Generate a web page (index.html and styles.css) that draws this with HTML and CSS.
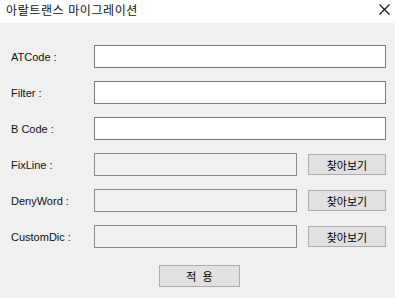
FILE: index.html
```html
<!DOCTYPE html>
<html lang="ko">
<head>
    <meta charset="UTF-8">
    <title>아랄트랜스 마이그레이션</title>
    <link rel="stylesheet" href="styles.css">
</head>
<body>
    <div class="window">
        <header class="title-bar">
            <span class="title">아랄트랜스 마이그레이션</span>
            <svg class="close" width="11" height="11" viewBox="0 0 11 11">
                <path d="M0.5 0.5 L10.5 10.5 M10.5 0.5 L0.5 10.5" stroke="#111" stroke-width="1.1" fill="none"/>
            </svg>
        </header>
        <main class="form">
            <div class="row">
                <label class="label">ATCode :</label>
                <input class="field" type="text">
            </div>
            <div class="row">
                <label class="label">Filter :</label>
                <input class="field" type="text">
            </div>
            <div class="row">
                <label class="label">B Code :</label>
                <input class="field" type="text">
            </div>
            <div class="row">
                <label class="label">FixLine :</label>
                <input class="field readonly" type="text" readonly>
                <button class="btn browse">찾아보기</button>
            </div>
            <div class="row">
                <label class="label">DenyWord :</label>
                <input class="field readonly" type="text" readonly>
                <button class="btn browse">찾아보기</button>
            </div>
            <div class="row">
                <label class="label">CustomDic :</label>
                <input class="field readonly" type="text" readonly>
                <button class="btn browse">찾아보기</button>
            </div>
            <div class="actions">
                <button class="btn apply">적&nbsp;&nbsp;용</button>
            </div>
        </main>
    </div>
</body>
</html>
```

FILE: styles.css
```css
* {
    box-sizing: border-box;
}
body {
    margin: 0;
    background-color: #f0f0f0;
    font-family: "Liberation Sans", "Noto Sans CJK KR", sans-serif;
    font-size: 11px;
    color: #000;
}
.window {
    width: 395px;
    height: 298px;
    display: flex;
    flex-direction: column;
}
.title-bar {
    height: 23px;
    background-color: #fff;
    display: flex;
    align-items: center;
    justify-content: space-between;
    padding: 0 5px 4px 6px;
}
.title {
    font-family: "Noto Sans CJK KR", sans-serif;
    font-size: 12px;
    letter-spacing: 0.6px;
    color: #111;
}
.form {
    display: flex;
    flex-direction: column;
    gap: 13px;
    padding: 22px 9px 0 11px;
}
.row {
    display: flex;
    align-items: center;
    height: 23px;
}
.label {
    width: 83px;
    flex: none;
    color: #111;
}
.field {
    flex: 1;
    height: 23px;
    border: 1px solid #7a7a7a;
    background-color: #fff;
    margin: 0;
    padding: 0 3px;
    outline: none;
}
.field.readonly {
    flex: none;
    width: 203px;
    background-color: #f0f0f0;
    border-color: #8a8a8a;
}
.btn {
    font-family: "Noto Sans CJK KR", sans-serif;
    font-size: 11px;
    background-color: #e1e1e1;
    border: 1px solid #adadad;
    color: #000;
    margin: 0;
    padding: 0;
}
.browse {
    width: 78px;
    height: 21px;
    margin-left: 11px;
}
.actions {
    display: flex;
    padding-left: 148px;
    margin-top: 4px;
}
.apply {
    width: 81px;
    height: 22px;
}
```
